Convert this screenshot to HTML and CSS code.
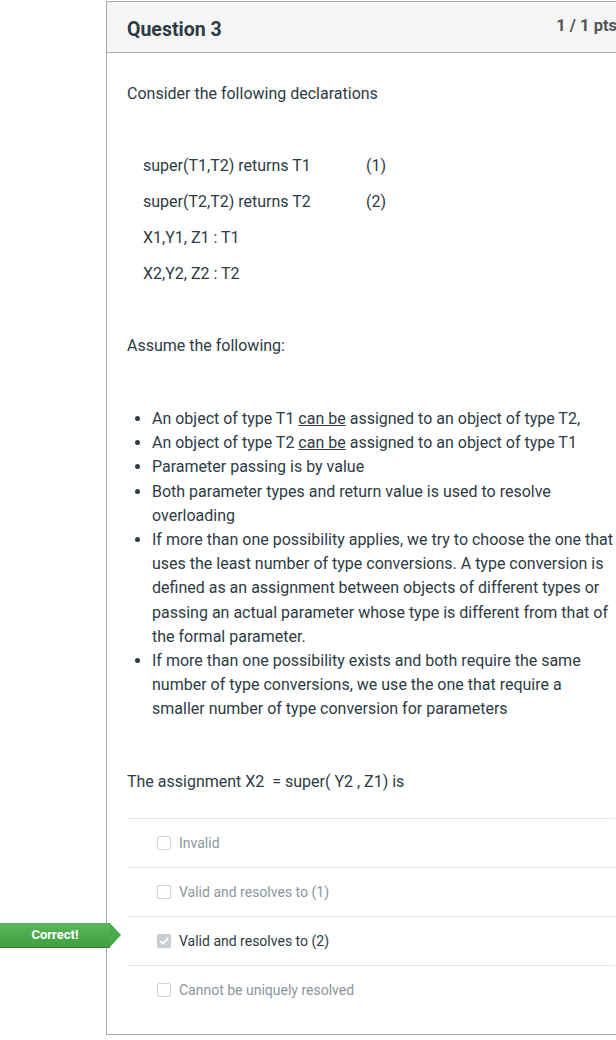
FILE: index.html
```html
<!DOCTYPE html>
<html>
<head>
<meta charset="utf-8">
<link rel="stylesheet" href="styles.css">
</head>
<body>
<div class="card">
  <div class="card-header">
    <span class="title">Question 3</span>
    <span class="pts">1 / 1 pts</span>
  </div>
  <div class="card-body">
    <p>Consider the following declarations</p>
    <p>&nbsp;</p>
    <p class="decl"><span class="sig">super(T1,T2) returns T1</span><span>(1)</span></p>
    <p class="decl"><span class="sig">super(T2,T2) returns T2</span><span>(2)</span></p>
    <p class="decl">X1,Y1, Z1 : T1</p>
    <p class="decl">X2,Y2, Z2 : T2</p>
    <p>&nbsp;</p>
    <p>Assume the following:</p>
    <p>&nbsp;</p>
    <ul class="list">
      <li>An object of type T1 <u>can be</u> assigned to an object of type T2,</li>
      <li>An object of type T2 <u>can be</u> assigned to an object of type T1</li>
      <li>Parameter passing is by value</li>
      <li>Both parameter types and return value is used to resolve overloading</li>
      <li>If more than one possibility applies, we try to choose the one that uses the least number of type conversions. A type conversion is defined as an assignment between objects of different types or passing an actual parameter whose type is different from that of the formal parameter.</li>
      <li>If more than one possibility exists and both require the same number of type conversions, we use the one that require a smaller number of type conversion for parameters</li>
    </ul>
    <p>&nbsp;</p>
    <p>The assignment X2&nbsp; = super( Y2 , Z1) is</p>
    <div class="answers">
      <div class="answer"><span class="box"></span><span class="label">Invalid</span></div>
      <div class="answer"><span class="box"></span><span class="label">Valid and resolves to (1)</span></div>
      <div class="answer selected">
        <div class="correct">Correct!</div>
        <span class="box checked"><svg width="14" height="14" viewBox="0 0 14 14"><path d="M3.2 7.2 L5.9 9.8 L10.9 4.4" fill="none" stroke="#fff" stroke-width="1.8" stroke-linecap="round" stroke-linejoin="round"/></svg></span><span class="label">Valid and resolves to (2)</span>
      </div>
      <div class="answer"><span class="box"></span><span class="label">Cannot be uniquely resolved</span></div>
    </div>
  </div>
</div>
</body>
</html>
```

FILE: styles.css
```css
html, body {
  margin: 0;
  padding: 0;
  background: #fff;
  overflow: hidden;
}
body {
  font-family: Roboto, "Liberation Sans", sans-serif;
  color: #2d3b45;
  width: 616px;
  height: 1040px;
}
.card {
  margin: 1px 0 0 106px;
  width: 530px;
  border: 1px solid #aaaaaa;
  box-sizing: border-box;
  background: #fff;
}
.card-header {
  height: 50px;
  background: #f5f5f5;
  border-bottom: 1px solid #aaaaaa;
  display: flex;
  justify-content: space-between;
  align-items: flex-start;
  padding: 0 18px 0 20px;
}
.title {
  font-size: 19.5px;
  font-weight: 700;
  line-height: 22px;
  margin-top: 17px;
  color: #2d3b45;
}
.pts {
  font-size: 16.5px;
  font-weight: 700;
  line-height: 20px;
  margin-top: 14px;
  color: #555;
}
.card-body {
  padding: 17px 20px 20px 20px;
}
p {
  margin: 12px 0;
  font-size: 16px;
  line-height: 24px;
}
.decl {
  padding-left: 16px;
  display: flex;
}
.sig {
  width: 223px;
}
.list {
  margin: 13px 0 10px;
  padding-left: 25px;
  font-size: 16px;
  line-height: 24.2px;
}
.answers {
  margin-top: 24px;
}
.answer {
  position: relative;
  border-top: 1px solid #e6e6e6;
  height: 48px;
  display: flex;
  align-items: center;
  padding-left: 30px;
  font-size: 14px;
  color: #8b969e;
}
.answer.selected {
  color: #2d3b45;
}
.box {
  width: 12px;
  height: 12px;
  border: 1px solid #cfd4d8;
  border-radius: 2px;
  margin-right: 8px;
  box-sizing: content-box;
  display: flex;
  align-items: center;
  justify-content: center;
  flex: none;
}
.box.checked {
  background: #c8cdd2;
  border-color: #c8cdd2;
}
.box.checked svg {
  flex: none;
}
.label {
  line-height: 18px;
}
.correct {
  position: absolute;
  left: -127px;
  top: 6px;
  width: 110px;
  height: 25px;
  background: linear-gradient(#5ab85a, #3f9e3f);
  border-bottom: 1px solid #2f7d2f;
  box-sizing: border-box;
  color: #fff;
  font-weight: 700;
  font-size: 13px;
  line-height: 24px;
  text-align: center;
}
.correct::after {
  content: "";
  position: absolute;
  right: -11px;
  top: 0;
  width: 0;
  height: 0;
  border-top: 12.5px solid transparent;
  border-bottom: 12.5px solid transparent;
  border-left: 11px solid #4aab4a;
}
```
